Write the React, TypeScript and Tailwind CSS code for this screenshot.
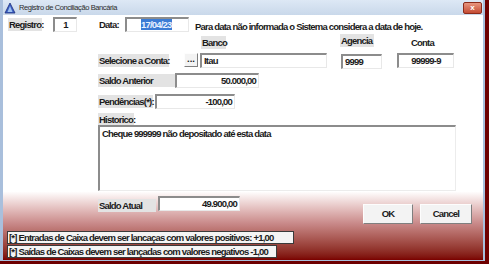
import React from 'react';

const font = { fontFamily: '"Liberation Sans", Arial, sans-serif' };

function Label({ children, className = '' }: { children: React.ReactNode; className?: string }) {
  return (
    <div className={`h-[13px] bg-[#e3e3e3] px-[1px] leading-[13px] whitespace-nowrap text-[#1b1b1b] ${className}`}>
      {children}
    </div>
  );
}

function Field({ children, className = '' }: { children?: React.ReactNode; className?: string }) {
  return (
    <div
      className={`h-[15px] bg-white border-t-2 border-l-2 border-r border-b border-t-[#8c8c8c] border-l-[#8c8c8c] border-r-[#e8e8e8] border-b-[#e8e8e8] px-[2px] leading-[12px] whitespace-nowrap text-[#1b1b1b] ${className}`}
    >
      {children}
    </div>
  );
}

function Btn({ children, className = '' }: { children: React.ReactNode; className?: string }) {
  return (
    <div
      className={`flex items-center justify-center bg-[#f3f3f3] border border-t-[#fdfdfd] border-l-[#fdfdfd] border-r-[#7f7f7f] border-b-[#7f7f7f] text-[#1b1b1b] ${className}`}
    >
      {children}
    </div>
  );
}

export default function App() {
  return (
    <div
      className="w-[489px] h-[264px] bg-[#6e0000] overflow-hidden text-[9.5px] tracking-[-0.8px] font-bold"
      style={font}
    >
      <div className="w-[485px] h-[261px] flex flex-col bg-[#b9cbe2] border-l-[3px] border-r-2 border-b border-[#a9bfdc]">
        {/* Title bar */}
        <div className="h-[15px] flex items-center bg-gradient-to-b from-[#dde8f5] to-[#c9d8ea] pl-[1px]">
          <svg width="12" height="12" viewBox="0 0 12 12" className="mr-[3px]">
            <path d="M6 1 L11 11 L1 11 Z" fill="#3b5fc4" stroke="#1d2f7a" strokeWidth="0.8" />
            <path d="M6 4 L8.5 10 L3.5 10 Z" fill="#9fc2f0" />
          </svg>
          <span className="font-normal text-[7.5px] tracking-[-0.4px] text-[#2b2b2b]">
            Registro de Conciliação Bancária
          </span>
          <div className="ml-auto mr-[1px] w-[19px] h-[12px] rounded-[2px] bg-gradient-to-b from-[#e7957f] to-[#c44a32] border border-[#8b2b1b] flex items-center justify-center text-white text-[8px] tracking-normal leading-none">
            x
          </div>
        </div>

        {/* Body */}
        <div className="flex-1 flex flex-col bg-gradient-to-b from-white from-[72%] via-[#c98a8a] via-[85%] to-[#7a0000] pl-[5px]">
          {/* Row 1 */}
          <div className="flex items-center mt-[2px] h-[15px]">
            <Label className="w-[34px]">Registro:</Label>
            <Field className="ml-[11px] w-[24px] text-center">1</Field>
            <Label className="ml-[21px] w-[21px] bg-transparent">Data:</Label>
            <Field className="ml-[6px] w-[64px] pl-[14px]">
              <span className="bg-[#3a7bd5] text-[#e8f0ff]">17/04/23</span>
            </Field>
            <span className="ml-[6px] mt-[6px] whitespace-nowrap text-[#1b1b1b]">
              Para data não informada o Sistema considera a data de hoje.
            </span>
          </div>

          {/* Row 2 headers */}
          <div className="flex items-end h-[17px]">
            <Label className="ml-[193px] w-[25px]">Banco</Label>
            <Label className="ml-[114px] w-[34px] mb-[2px]">Agencia</Label>
            <div className="ml-[37px] w-[24px] text-[#1b1b1b] leading-[13px]">Conta</div>
          </div>

          {/* Row 3 */}
          <div className="flex items-center h-[16px] mt-[3px]">
            <Label className="ml-[90px] w-[71px]">Selecione a Conta:</Label>
            <Btn className="ml-[15px] w-[14px] h-[14px] leading-none pb-[3px] tracking-normal">...</Btn>
            <Field className="ml-[2px] w-[127px]">Itau</Field>
            <Field className="ml-[14px] w-[41px] mt-[2px]">9999</Field>
            <Field className="ml-[15px] w-[57px] text-center">99999-9</Field>
          </div>

          {/* Row 4 */}
          <div className="flex items-center h-[15px] mt-[5px]">
            <Label className="ml-[90px] w-[77px]">Saldo Anterior</Label>
            <Field className="w-[84px] text-right">50.000,00</Field>
          </div>

          {/* Row 5 */}
          <div className="flex items-center h-[15px] mt-[6px]">
            <Label className="ml-[90px] w-[55px]">Pendências(*):</Label>
            <Field className="ml-[2px] w-[80px] text-right">-100,00</Field>
          </div>

          {/* Row 6 */}
          <div className="flex h-[12px] mt-[4px]">
            <Label className="ml-[90px] w-[36px] h-[12px] leading-[12px]">Historico:</Label>
          </div>
          <div className="ml-[90px] w-[358px] h-[66px] bg-white border-t-2 border-l-2 border-r border-b border-t-[#8c8c8c] border-l-[#8c8c8c] border-r-[#ececec] border-b-[#ececec] px-[2px] leading-[13px] text-[#1b1b1b]">
            Cheque 999999 não depositado até esta data
          </div>

          {/* Saldo atual + buttons */}
          <div className="flex items-start mt-[5px] h-[28px]">
            <Label className="ml-[90px] w-[58px] mt-[3px]">Saldo Atual</Label>
            <Field className="ml-[2px] w-[82px] text-right">49.900,00</Field>
            <Btn className="ml-[123px] mt-[8px] w-[50px] h-[20px]">OK</Btn>
            <Btn className="ml-[7px] mt-[8px] w-[52px] h-[20px]">Cancel</Btn>
          </div>

          {/* Notes */}
          <div className="flex flex-col items-start gap-[1px] mt-[7px] -ml-[1px]">
            <div className="w-[287px] h-[13px] bg-[#f4f4f4] border border-[#3a3a3a] px-[1px] leading-[11px] whitespace-nowrap text-[#1b1b1b]">
              [*] Entradas de Caixa devem ser lancaças com valores positivos: +1,00
            </div>
            <div className="w-[270px] h-[13px] bg-[#f4f4f4] border border-[#3a3a3a] px-[1px] leading-[11px] whitespace-nowrap text-[#1b1b1b]">
              [*] Saídas de Caixas devem ser lançadas com valores negativos -1,00
            </div>
          </div>
        </div>
      </div>
    </div>
  );
}
